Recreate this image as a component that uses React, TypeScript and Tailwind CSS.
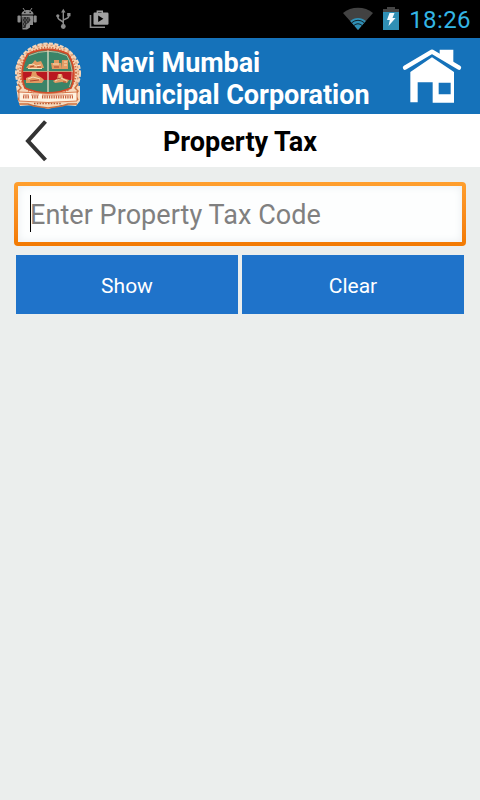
import React, { useState } from "react";

const PhoneStatusBar: React.FC = () => (
  <div className="flex h-[38px] items-center bg-black">
    {/* Debug robot */}
    <svg className="ml-4 h-6 w-6" viewBox="0 0 24 24" fill="#8c8c8c">
      <path d="M7 1l2 3M16 1l-2 3" stroke="#8c8c8c" strokeWidth="1" />
      <path d="M5.500 7.500C5.500 1.500 17.500 1.500 17.500 7.500Z" />
      <rect x="1.500" y="8.500" width="3.200" height="7" rx="1" />
      <rect x="17.500" y="8.500" width="3.200" height="7" rx="1" />
      <path d="M5.500 8.500h11.500v9.500h-3v2.500l-3 2H6.500z" />
      <path d="M6.500 10h7l1 3-2 3-2 1-1 4H6.500z" fill="#303030" />
      <path
        d="M7 11h1m2 0h1m1.500 0h1M8.500 13h1m2 0h1M7 15h1m2 0h1M8 17h1M7 19h1"
        stroke="#8c8c8c"
        strokeWidth="1"
      />
      <rect x="8.200" y="4.800" width="1.300" height="1.300" fill="#000" />
      <rect x="13.500" y="4.800" width="1.300" height="1.300" fill="#000" />
    </svg>

    {/* USB */}
    <svg className="ml-3 h-6 w-6" viewBox="0 0 24 24" fill="#8c8c8c">
      <path
        d="M11.300 4v15M11.300 16c0-3-5.500-2-5.500-6M11.300 13.500c0-2 5.500-1 5.500-4.500"
        fill="none"
        stroke="#8c8c8c"
        strokeWidth="1.400"
      />
      <path d="M11.300 1.800l2.200 3.700H9.100z" />
      <circle cx="11.300" cy="19.500" r="2.400" />
      <circle cx="5.800" cy="8.800" r="1.600" />
      <rect x="15.200" y="6" width="3.300" height="3.300" />
    </svg>

    {/* Play store bag */}
    <svg className="ml-3 h-6 w-6" viewBox="0 0 24 24" fill="#a0a0a0">
      <path d="M2.500 8v12.200H17" fill="none" stroke="#8c8c8c" strokeWidth="1.600" />
      <path d="M9.300 6V4.300h5V6" fill="none" stroke="#a0a0a0" strokeWidth="1.400" />
      <rect x="5.500" y="5.500" width="15" height="12.300" rx="1.200" />
      <path d="M10.200 8.500v6.500l5.200-3.200z" fill="#000" />
    </svg>

    {/* Wifi */}
    <svg className="ml-auto h-6 w-8" viewBox="0 0 32 24">
      <path d="M16 23L1 6C9-1 23-1 31 6Z" fill="#424242" />
      <path d="M16 23L8.200 14C12.500 10 19.500 10 23.800 14Z" fill="#2f8fb5" />
      <path
        d="M9.700 15.700Q16 10.800 22.300 15.700M11.800 18.500Q16 15 20.200 18.500"
        fill="none"
        stroke="#101e25"
        strokeWidth="1"
      />
    </svg>

    {/* Charging battery */}
    <svg className="ml-[9px] h-6 w-4" viewBox="0 0 16 24">
      <path d="M4 0h8v2h4v3H0V2h4z" fill="#454545" />
      <path d="M0 5h16v18H0z" fill="#2f8fb5" />
      <path d="M6.500 6h5L9.500 11h3L5.500 19l1.300-6H4z" fill="#f4fbff" />
    </svg>

    <span className="ml-2.5 mr-[9px] w-[62px] whitespace-nowrap pt-0.5 text-right text-[24px] leading-9 tracking-[0.4px] text-[#33b5e5]">
      18:26
    </span>
  </div>
);

const Crest: React.FC = () => (
  <svg className="h-[68px] w-[68px] shrink-0" viewBox="0 0 68 68">
    {/* Leafy outer wreath */}
    <ellipse cx="34" cy="31" rx="31.500" ry="29" fill="#f6d3b4" />
    <ellipse
      cx="34"
      cy="31"
      rx="31"
      ry="28.500"
      fill="none"
      stroke="#dfa077"
      strokeWidth="3"
      strokeDasharray="2.200 2.400"
    />
    <ellipse
      cx="34"
      cy="31"
      rx="32"
      ry="29.500"
      fill="none"
      stroke="#f5d6ba"
      strokeWidth="2"
      strokeDasharray="4 1.600"
    />
    <path d="M2 44l8-2 10 10h28l10-10 8 2v15l-4 5-14-1-14 4-14-4-14 1-2-6z" fill="#f5d9bd" />
    <path
      d="M4 42l3 4-3 3 3 4-3 5M64 42l-3 4 3 3-3 4 3 5M5 62l9 0 6 2 14 2 14-2 6-2 9 0"
      fill="none"
      stroke="#cd7240"
      strokeWidth="1.500"
    />
    <ellipse
      cx="34"
      cy="30.500"
      rx="28"
      ry="25"
      fill="none"
      stroke="#cb6438"
      strokeWidth="1.800"
      strokeDasharray="1.200 1.600"
    />

    {/* Quartered shield */}
    <clipPath id="shield">
      <path d="M14 12Q34 3 54 12Q64 29 57 46Q34 56 11 46Q4 29 14 12Z" />
    </clipPath>
    <g clipPath="url(#shield)">
      <rect x="6" y="6" width="56" height="48" fill="#3a8468" />
      <rect x="6" y="30" width="56" height="8" fill="#ba1820" />
      <path d="M34 7v44" stroke="#efe6cf" strokeWidth="1.200" />
      <path d="M6 29.500h56" stroke="#d59a75" strokeWidth="0.900" />
    </g>
    <path
      d="M14 12Q34 3 54 12Q64 29 57 46Q34 56 11 46Q4 29 14 12Z"
      fill="none"
      stroke="#d34a28"
      strokeWidth="1.800"
    />
    <path
      d="M15 13.500Q34 5 53 13.500Q62 29 55.500 45"
      fill="none"
      stroke="#f2d7b4"
      strokeWidth="0.700"
    />

    {/* Emblems in each quarter */}
    <path
      d="M12 26l3-4 3 0 3-4 2 2 4-1 2 4 1 3zM37 21h3v-3h5v3h2v6h-9zM48 18h6v9h-7zM12 36l5-2 1-4h4l1 3 5 3 2 2-2 3H12zM39 39l4-2 1-5h4l1 4 6 2-2 3-5-1-7 1z"
      fill="#e29a62"
    />
    <path
      d="M15 23l4-1 3 2 5-1M14 26.500h14M39 22h6M50 20h3m-3 3h3M14 37l5-2 7 2M41 39l6-3 6 3M46 32v4"
      fill="none"
      stroke="#f8dfb8"
      strokeWidth="1"
    />
    <path
      d="M16 25l4-1M23 25h4M40 25h5M16 39l9-1M43 37l4-1M49 40h3"
      stroke="#a83b25"
      strokeWidth="0.900"
    />

    {/* Ribbon with motto */}
    <path d="M5 50q29 3 58 0v9q-29 3-58 0z" fill="#fff2df" stroke="#d57143" strokeWidth="0.900" />
    <path d="M9 53h6m2 0h8m3 0h31" stroke="#cd6a45" strokeWidth="0.800" />
    <path
      d="M9 55h6m3 0h7m3 0h31"
      stroke="#c96440"
      strokeWidth="3"
      strokeDasharray="1.300 1"
    />
    <path d="M20 61.500h28" stroke="#bd592e" strokeWidth="1.500" strokeDasharray="1.500 1.300" />
  </svg>
);

const HomeIcon: React.FC = () => (
  <svg className="h-14 w-[60px]" viewBox="0 0 180 168">
    <path
      d="M25 72L90 28 156 72V164H92V103H47V163H25ZM110 104V139H146V104Z"
      fill="#fff"
      fillRule="evenodd"
    />
    <path
      d="M9 64L90 14 171 64"
      fill="none"
      stroke="#1572ba"
      strokeWidth="15"
    />
    <path
      d="M9 59L90 11 171 59"
      fill="none"
      stroke="#fff"
      strokeWidth="13"
      strokeLinecap="round"
      strokeLinejoin="round"
    />
    <path d="M113 5H154V48L113 22Z" fill="#fff" />
  </svg>
);

export default function App() {
  const [taxCode, setTaxCode] = useState("");

  return (
    <div className="flex h-[800px] w-[480px] flex-col overflow-hidden bg-[#ebeeed] font-['Roboto',sans-serif]">
      <PhoneStatusBar />

      {/* Header */}
      <header className="flex h-[76px] items-center bg-[#1572ba] pl-[14px] pr-[18px]">
        <Crest />
        <h1 className="ml-[19px] whitespace-nowrap pt-1.5 text-[27px] font-bold leading-8 tracking-[-0.05px] text-white">
          Navi Mumbai
          <br />
          Municipal Corporation
        </h1>
        <button className="ml-auto" aria-label="Home">
          <HomeIcon />
        </button>
      </header>

      {/* Page title */}
      <div className="grid h-[53px] grid-cols-[72px_1fr_72px] items-center bg-white">
        <button className="pl-6" aria-label="Back">
          <svg className="h-11 w-6" viewBox="0 0 24 44">
            <path d="M21.500 2.500L4 22l17.500 19" fill="none" stroke="#333" strokeWidth="4" />
          </svg>
        </button>
        <h2 className="whitespace-nowrap pt-0.5 text-center text-[27px] font-bold leading-8 text-black">
          Property Tax
        </h2>
      </div>

      {/* Search form */}
      <form className="px-[14px] pt-[15px]" onSubmit={(e) => e.preventDefault()}>
        <div className="h-16 rounded bg-gradient-to-b from-[#ff9f2e] to-[#f27900] p-1">
          <div className="flex h-full items-center bg-[#fdfefe] pl-3 shadow-[inset_0_0_8px_#e9edef]">
            <span className="mb-0.5 h-[37px] w-px shrink-0 bg-black" />
            <input
              className="-ml-px w-full bg-transparent pt-0.5 text-[27px] leading-8 tracking-[0.06px] text-black outline-none placeholder:text-[#808080]"
              placeholder="Enter Property Tax Code"
              value={taxCode}
              onChange={(e) => setTaxCode(e.target.value)}
            />
          </div>
        </div>
        <div className="mt-[9px] grid grid-cols-2 gap-1 px-0.5">
          <button type="submit" className="h-[59px] bg-[#1f73ca] pt-1 text-[21px] text-white">
            Show
          </button>
          <button
            type="button"
            onClick={() => setTaxCode("")}
            className="h-[59px] bg-[#1f73ca] pt-1 text-[21px] text-white"
          >
            Clear
          </button>
        </div>
      </form>
    </div>
  );
}
